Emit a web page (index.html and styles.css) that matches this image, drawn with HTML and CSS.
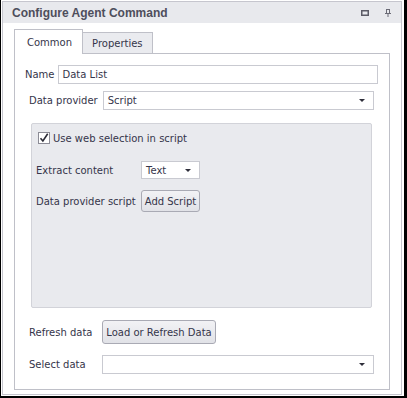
FILE: index.html
```html
<!DOCTYPE html>
<html>
<head>
<meta charset="utf-8">
<link rel="stylesheet" href="styles.css">
</head>
<body>
<div class="window">
  <div class="panel">
    <div class="titlebar">
      <span class="title">Configure Agent Command</span>
      <span class="ticons">
        <svg class="ico-max" width="8" height="6" viewBox="0 0 8 6"><rect x="0.75" y="0.75" width="6.5" height="4.5" fill="none" stroke="#5b5b66" stroke-width="1.5"/></svg>
        <svg class="ico-pin" width="6" height="8" viewBox="0 0 6 8"><path d="M1 0.5h4M1.5 0.5v4M4.5 0.5v4M0 4.5h6M3 4.5v3.5" fill="none" stroke="#6b6b76" stroke-width="1"/></svg>
      </span>
    </div>
    <div class="tabs">
      <div class="tab active">Common</div>
      <div class="tab">Properties</div>
    </div>
    <div class="tabpanel">
      <div class="row row-name">
        <label class="lbl">Name</label>
        <div class="input">Data List</div>
      </div>
      <div class="row row-provider">
        <label class="lbl">Data provider</label>
        <div class="select wide"><span>Script</span><span class="caret"></span></div>
      </div>
      <div class="group">
        <div class="check-row">
          <svg class="checkbox" width="12" height="12" viewBox="0 0 12 12"><rect x="0.5" y="0.5" width="11" height="11" fill="#fff" stroke="#8c8c96"/><path d="M2.5 6.2l2.4 2.8 4.8-7.2" fill="none" stroke="#2b2b36" stroke-width="1.6"/></svg>
          <span>Use web selection in script</span>
        </div>
        <div class="grow-grid">
          <label class="lbl">Extract content</label>
          <div class="select small"><span>Text</span><span class="caret"></span></div>
          <label class="lbl">Data provider script</label>
          <button class="btn btn-add">Add Script</button>
        </div>
      </div>
      <div class="bottom-grid">
        <label class="lbl">Refresh data</label>
        <div><button class="btn btn-load">Load or Refresh Data</button></div>
        <label class="lbl">Select data</label>
        <div class="select wide2"><span></span><span class="caret"></span></div>
      </div>
    </div>
  </div>
</div>
</body>
</html>
```

FILE: styles.css
```css
* { box-sizing: border-box; }
html, body { margin: 0; padding: 0; background: #fff; }
body {
  font-family: "DejaVu Sans", Tahoma, sans-serif;
  font-size: 10px;
  color: #35354a;
}
.window {
  width: 407px;
  height: 398px;
  border-left: 1px solid #000;
  border-right: 3px solid #000;
  border-bottom: 2px solid #000;
  padding: 1px 2px 1px 1px;
  background: #fff;
}
.panel {
  height: 100%;
  border: 1px solid #c6c6ce;
  display: flex;
  flex-direction: column;
}
.titlebar {
  height: 21px;
  background: #e8e9ed;
  display: flex;
  align-items: center;
  justify-content: space-between;
  padding: 0 10px 0 9px;
}
.title {
  font-family: "Liberation Sans", Arial, sans-serif;
  font-weight: bold;
  font-size: 12px;
  color: #4e4e5c;
}
.ticons { display: flex; align-items: center; gap: 16px; }
.ico-max { margin-top: 1px; }
.tabs {
  display: flex;
  align-items: flex-end;
  margin: 6px 0 0 11px;
  height: 24px;
}
.tab {
  border: 1px solid #bfc0c8;
  border-bottom: none;
  background: #eaebef;
  height: 21px;
  padding: 0 9px 0 9px;
  display: flex;
  align-items: center;
  font-size: 10px;
  color: #35354a;
  white-space: nowrap;
}
.tab.active {
  background: #fff;
  height: 25px;
  padding: 0 10px 0 12px;
  margin-bottom: -1px;
  position: relative;
  z-index: 1;
}
.tab + .tab { border-left: none; }
.tabpanel {
  flex: 1;
  margin: 0 11px 4px 11px;
  border: 1px solid #bfc0c8;
  display: flex;
  flex-direction: column;
}
.row { display: flex; align-items: center; }
.row-name { margin: 11px 11px 0 10px; gap: 3px; }
.row-provider { margin: 7px 15px 0 14px; gap: 5px; }
.input, .select {
  height: 19px;
  border: 1px solid #c9cad1;
  background: #fff;
  display: flex;
  align-items: center;
  padding: 0 4px;
  flex: 1;
}
.select { justify-content: space-between; }
.caret {
  width: 0; height: 0;
  border-left: 3px solid transparent;
  border-right: 3px solid transparent;
  border-top: 3px solid #2e2e3a;
  margin-right: 4px;
}
.group {
  margin: 13px 17px 0 16px;
  height: 185px;
  background: #e9eaee;
  border: 1px solid #d2d3d9;
  border-radius: 2px;
  padding: 8px 0 0 4px;
}
.check-row {
  display: flex;
  align-items: center;
  gap: 3px;
  padding-left: 2px;
  height: 12px;
}
.grow-grid {
  display: grid;
  grid-template-columns: 105px 59px;
  grid-template-rows: 18px 22px;
  row-gap: 11px;
  align-items: center;
  margin-top: 17px;
}
.select.small { height: 18px; }
.btn {
  font-family: inherit;
  font-size: 10px;
  color: #35354a;
  background: linear-gradient(#f2f2f5, #e1e2e7);
  border: 1px solid #a9aab4;
  border-radius: 3px;
  padding: 0 2px;
  margin: 0;
  white-space: nowrap;
}
.btn-add { height: 22px; width: 59px; }
.btn-load { height: 24px; width: 114px; }
.bottom-grid {
  display: grid;
  grid-template-columns: 73px 1fr;
  grid-template-rows: 24px 19px;
  row-gap: 11px;
  align-items: center;
  margin: 12px 15px 0 14px;
}
```
